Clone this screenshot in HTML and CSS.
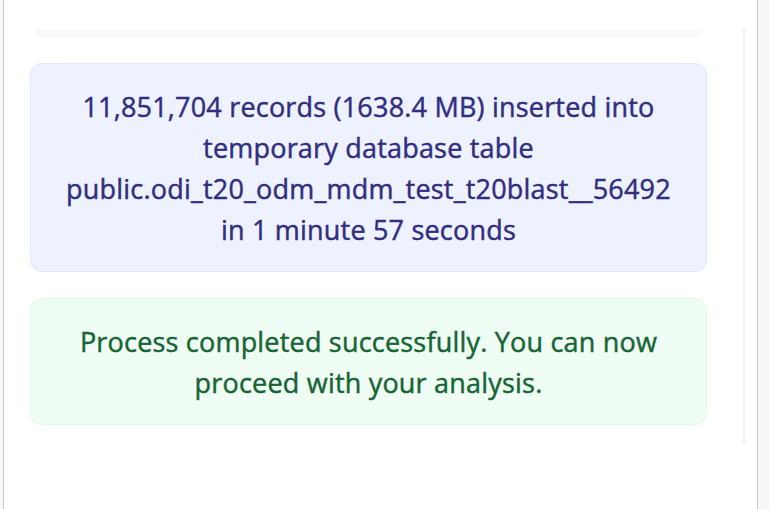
FILE: index.html
```html
<!DOCTYPE html>
<html>
<head>
<meta charset="utf-8">
<link rel="stylesheet" href="styles.css">
</head>
<body>
<div class="frame">
  <div class="panel">
    <div class="content">
      <div class="topbar"></div>
      <div class="msg info">11,851,704 records (1638.4 MB) inserted into temporary database table public.odi_t20_odm_mdm_test_t20blast__56492 in 1 minute 57 seconds</div>
      <div class="msg success">Process completed successfully. You can now proceed with your analysis.</div>
    </div>
    <div class="scrolltrack"></div>
  </div>
</div>
</body>
</html>
```
FILE: styles.css
```css
html, body {
  margin: 0;
  padding: 0;
  width: 769px;
  height: 509px;
  overflow: hidden;
  background: #f7f7f7;
}
.frame {
  display: flex;
  height: 509px;
  padding-left: 3px;
}
.panel {
  width: 755px;
  height: 509px;
  background: #ffffff;
  border-left: 1px solid #c8c8c8;
  border-right: 1px solid #c8c8c8;
  display: flex;
  box-sizing: border-box;
}
.content {
  width: 677px;
  margin-left: 26px;
  display: flex;
  flex-direction: column;
  padding-top: 29px;
}
.topbar {
  height: 8px;
  margin: 0 4px 0 5px;
  background: #f8f9fa;
  border-radius: 0 0 14px 14px;
  margin-bottom: 26px;
}
.msg {
  font-family: "Open Sans", "Noto Sans", sans-serif;
  font-size: 27px;
  font-weight: 400;
  letter-spacing: 0.2px;
  -webkit-text-stroke: 0.45px currentColor;
  line-height: 41px;
  text-align: center;
  border-radius: 12px;
  box-sizing: border-box;
}
.info {
  background: #eef2ff;
  border: 1px solid #e0e7ff;
  color: #312e81;
  padding: 22px 20px 21px;
  margin-bottom: 26px;
}
.success {
  background: #f0fdf4;
  border: 1px solid #dcfce7;
  color: #166534;
  padding: 22px 20px 21px;
}
.scrolltrack {
  width: 2px;
  height: 415px;
  margin-top: 29px;
  margin-left: 36px;
  background: #efefef;
}
```
